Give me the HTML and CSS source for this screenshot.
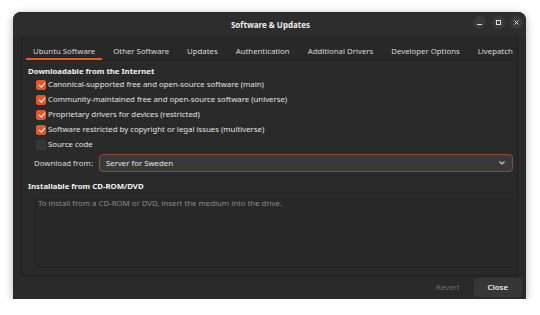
FILE: index.html
```html
<!DOCTYPE html>
<html lang="en">
<head>
  <meta charset="UTF-8" />
  <title>Software &amp; Updates</title>
  <link rel="stylesheet" href="styles.css">
</head>
<body>
  <div class="window">
    <div class="titlebar">
      <span class="title">Software &amp; Updates</span>
      <div class="wm-buttons">
        <span class="wm-btn">
          <svg width="7" height="7" viewBox="0 0 7 7"><path d="M1 5.5h5" stroke="#ddd" stroke-width="1"/></svg>
        </span>
        <span class="wm-btn">
          <svg width="7" height="7" viewBox="0 0 7 7"><rect x="1.5" y="1.5" width="4" height="4" fill="none" stroke="#ddd" stroke-width="1"/></svg>
        </span>
        <span class="wm-btn">
          <svg width="7" height="7" viewBox="0 0 7 7"><path d="M1.5 1.5l4 4M5.5 1.5l-4 4" stroke="#ddd" stroke-width="1"/></svg>
        </span>
      </div>
    </div>

    <div class="notebook">
      <div class="tabs">
        <span class="tab active">Ubuntu Software</span>
        <span class="tab">Other Software</span>
        <span class="tab">Updates</span>
        <span class="tab">Authentication</span>
        <span class="tab">Additional Drivers</span>
        <span class="tab">Developer Options</span>
        <span class="tab">Livepatch</span>
      </div>

      <div class="page">
        <div class="heading">Downloadable from the Internet</div>
        <div class="checks">
          <label class="check"><span class="box on"></span>Canonical-supported free and open-source software (main)</label>
          <label class="check"><span class="box on"></span>Community-maintained free and open-source software (universe)</label>
          <label class="check"><span class="box on"></span>Proprietary drivers for devices (restricted)</label>
          <label class="check"><span class="box on"></span>Software restricted by copyright or legal issues (multiverse)</label>
          <label class="check"><span class="box"></span>Source code</label>
        </div>

        <div class="download-row">
          <span class="dl-label">Download from:</span>
          <div class="combo">
            <span>Server for Sweden</span>
            <svg width="8" height="6" viewBox="0 0 8 6"><path d="M1.5 1.5l2.5 2.5 2.5-2.5" fill="none" stroke="#cfcfcf" stroke-width="1.1"/></svg>
          </div>
        </div>

        <div class="heading cd">Installable from CD-ROM/DVD</div>
        <div class="cd-box">
          <div class="hint">To install from a CD-ROM or DVD, insert the medium into the drive.</div>
        </div>
      </div>
    </div>

    <div class="actions">
      <span class="btn disabled">Revert</span>
      <span class="btn close">Close</span>
    </div>
  </div>
</body>
</html>
```

FILE: styles.css
```css
body {
  margin: 0;
  background: #ffffff;
  font-family: "Noto Sans", "Open Sans", sans-serif;
  font-size: 7.8px;
  color: #dedede;
}
.window {
  margin: 12px 0 0 13px;
  width: 513px;
  height: 287px;
  background: #2a2a2a;
  border-radius: 8px 8px 0 0;
  box-shadow: 0 2px 9px rgba(0, 0, 0, 0.3);
  display: flex;
  flex-direction: column;
  overflow: hidden;
}
.titlebar {
  height: 24px;
  flex-shrink: 0;
  background: #2d2d2d;
  position: relative;
  display: flex;
  align-items: center;
  justify-content: center;
}
.title {
  font-weight: bold;
  color: #ececec;
  font-size: 8px;
  margin-left: 2px;
}
.wm-buttons {
  position: absolute;
  right: 3px;
  top: 4px;
  display: flex;
  gap: 5.5px;
}
.wm-btn {
  width: 13px;
  height: 13px;
  border-radius: 50%;
  background: #3a3a3a;
  display: flex;
  align-items: center;
  justify-content: center;
}
.notebook {
  margin: 0 8px 0 8px;
  height: 239px;
  border-left: 1px solid #1f1f1f;
  border-right: 1px solid #1f1f1f;
  border-bottom: 1px solid #1f1f1f;
  display: flex;
  flex-direction: column;
  background: #2a2a2a;
}
.tabs {
  display: flex;
  gap: 4px;
  padding-left: 4px;
  background: #282828;
  border-bottom: 1px solid #222;
}
.tab {
  padding: 9px 7px 1px;
  line-height: 12px;
  border-bottom: 2px solid transparent;
  color: #d8d8d8;
  white-space: nowrap;
}
.tab.active {
  border-bottom-color: #e05a2b;
}
.page {
  flex: 1;
  padding: 4px 4px 7px 6px;
  display: flex;
  flex-direction: column;
}
.heading {
  font-weight: bold;
  color: #f2f2f2;
  line-height: 12px;
}
.checks {
  display: flex;
  flex-direction: column;
  padding-left: 8px;
}
.check {
  display: flex;
  align-items: center;
  gap: 2px;
  line-height: 15px;
  height: 15px;
  color: #e2e2e2;
}
.box {
  width: 10px;
  height: 10px;
  border-radius: 2px;
  background: #343434;
  box-sizing: border-box;
  border: 1px solid #3d3d3d;
  position: relative;
}
.box.on {
  background: #e2572a;
  border-color: #e2572a;
}
.box.on::after {
  content: "";
  position: absolute;
  left: 2.5px;
  top: 0.5px;
  width: 2.5px;
  height: 5px;
  border: solid #fff;
  border-width: 0 1.3px 1.3px 0;
  transform: rotate(40deg);
}
.download-row {
  display: flex;
  align-items: center;
  margin-top: 2px;
  padding-left: 6px;
}
.dl-label {
  width: 65px;
  color: #dcdcdc;
}
.combo {
  flex: 1;
  height: 18px;
  box-sizing: border-box;
  border: 1px solid #8a4d3c;
  border-radius: 4px;
  background: #393939;
  display: flex;
  align-items: center;
  justify-content: space-between;
  padding: 0 6px 0 6px;
  color: #e6e6e6;
}
.heading.cd {
  margin-top: 8px;
}
.cd-box {
  flex: 1;
  margin: 5px 0 0 7px;
  border-left: 1px solid #222;
  border-bottom: 1px solid #1e1e1e;
  background: #282828;
}
.hint {
  color: #8a8a8a;
  line-height: 12px;
  padding-left: 2px;
}
.actions {
  flex: 1;
  display: flex;
  justify-content: flex-end;
  align-items: center;
  padding-right: 4px;
  background: #2a2a2a;
}
.btn {
  height: 19px;
  line-height: 19px;
  padding: 0 14px;
  border-radius: 4px;
}
.btn.disabled {
  color: #6c6c6c;
  margin-right: 0;
}
.btn.close {
  background: #363636;
  color: #f0f0f0;
  font-weight: 600;
}
```
